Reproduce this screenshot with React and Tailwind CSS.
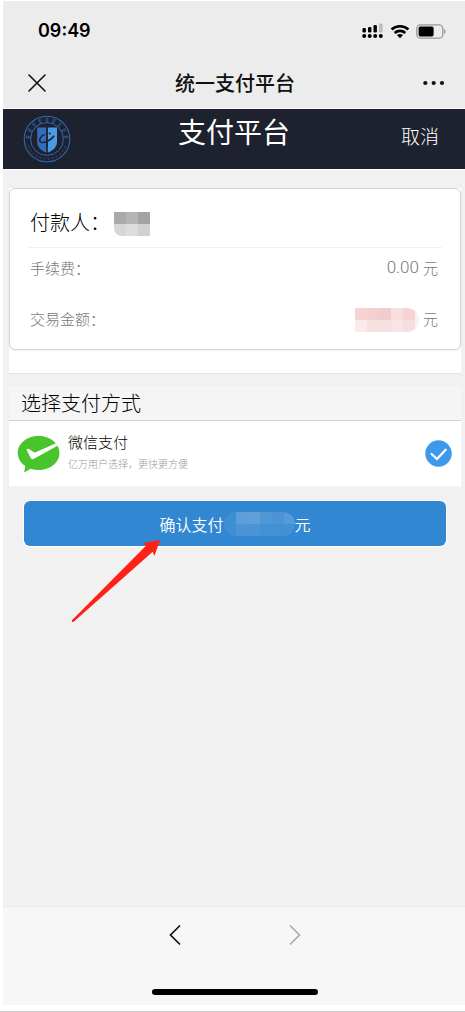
import { useState } from "react";

const RING_MARKS = [-84, -63, -42, -21, 0, 21, 42, 63, 84];
const RING_DOTS = [110, 122, 134, 146, 158, 170, 182, 194, 206, 218, 230, 242];

function SignalIcon() {
    return (
        <svg width="22" height="16" viewBox="0 0 22 16" aria-hidden="true">
            <rect x="0.5" y="5" width="3.4" height="4.4" rx="1.2" />
            <rect x="6" y="4" width="3.4" height="5.4" rx="1.2" />
            <rect x="11.5" y="2" width="3.4" height="7.4" rx="1.2" />
            <rect x="17" y="0.5" width="3.6" height="9" rx="1.2" fill="#bdbdbd" />
            <circle cx="2.2" cy="13" r="2" />
            <circle cx="7.7" cy="13" r="2" />
            <circle cx="13.2" cy="13" r="2" />
            <circle cx="18.8" cy="13" r="2" />
        </svg>
    );
}

function WifiIcon() {
    return (
        <svg width="20" height="15" viewBox="0 0 20 15" fill="none" stroke="#000" strokeWidth="2.7" aria-hidden="true">
            <path d="M1.6 5.6C6.3 1.1 13.7 1.1 18.4 5.6" />
            <path d="M4.7 9C7.7 6.2 12.3 6.2 15.3 9" />
            <path d="M10 14.2L6.9 11.1C8.6 9.5 11.4 9.5 13.1 11.1Z" fill="#000" stroke="none" />
        </svg>
    );
}

function BatteryIcon() {
    return (
        <svg width="31" height="15" viewBox="0 0 31 15" aria-hidden="true">
            <rect x="0.8" y="0.8" width="26" height="13.4" rx="3.8" fill="none" stroke="#999" strokeWidth="1.3" />
            <rect x="2.6" y="2.6" width="15" height="9.8" rx="1.6" />
            <path d="M28.2 5V10C29.8 9.4 29.8 5.6 28.2 5Z" fill="#888" />
        </svg>
    );
}

function SchoolLogo() {
    return (
        <svg width="48" height="48" viewBox="0 0 48 48" fill="none" stroke="#2f68ad" aria-hidden="true">
            <circle cx="24" cy="24" r="22.8" strokeWidth="1.1" />
            <circle cx="24" cy="24" r="16.4" strokeWidth="1" />
            {RING_MARKS.map((angle) => (
                <path
                    key={angle}
                    d="M22.2 3.6L25.8 3M24 2.8L23.4 6.6M22.4 5.4L25.6 4.9M22.6 7L25.4 6.5"
                    strokeWidth="0.6"
                    transform={`rotate(${angle} 24 24)`}
                />
            ))}
            {RING_DOTS.map((angle) => (
                <path key={angle} d="M23 43V44.6M24.2 43V44.6" strokeWidth="0.5" transform={`rotate(${angle - 176} 24 24)`} />
            ))}
            <path d="M14.2 12.4H23.2V37.4C18 35.8 14.2 32 14.2 27Z" fill="#326ec0" stroke="none" />
            <path d="M24.8 12.4H34V27C34 32 30 35.8 24.8 37.4Z" fill="#4a9be3" stroke="none" />
            <path d="M21.8 19.4C17.4 21 15.6 25 17.4 26.8C20 29 28.6 25.4 31 20.6" stroke="#1e222e" strokeWidth="1.5" />
            <path d="M26 17.6L27.6 19.4M24 12.4V32" stroke="#1e222e" strokeWidth="1.4" />
        </svg>
    );
}

function WechatPayIcon() {
    return (
        <svg width="43" height="38" viewBox="0 0 43 38" className="shrink-0" aria-hidden="true">
            <path
                d="M21.5 1C33 1 42.5 8.4 42.5 18C42.5 27.6 33 35 21.5 35C18.8 35 16.2 34.6 13.8 33.8L7.2 37.4L8.2 31.1C3.7 28 0.8 23.3 0.8 18C0.8 8.4 10 1 21.5 1Z"
                fill="#49c52c"
            />
            <path
                d="M9.8 14.3C10.4 13.2 11.7 13.6 12.7 14.4L16.4 17C17.3 17.6 18.2 17.5 19.2 17L39 8.2L40.5 10.8L17 23.8C15.4 24.7 14.4 24.4 13.7 23.1L10 15.8C9.8 15.3 9.6 14.8 9.8 14.3Z"
                fill="#fff"
            />
        </svg>
    );
}

function Mosaic({ rows, className }) {
    return (
        <span className={`flex flex-col overflow-hidden ${className}`} aria-hidden="true">
            {rows.map((row, i) => (
                <span key={i} className="flex h-3">
                    {row.map((color, j) => (
                        <span key={j} className="w-3 shrink-0" style={{ backgroundColor: color }} />
                    ))}
                </span>
            ))}
        </span>
    );
}

function StatusBar() {
    return (
        <div className="flex h-14 items-center justify-between pt-1 pr-[18px] pl-[35px]">
            <span className="font-[Inter,sans-serif] text-lg font-semibold text-black">09:49</span>
            <div className="flex items-center gap-1.5">
                <SignalIcon />
                <WifiIcon />
                <BatteryIcon />
            </div>
        </div>
    );
}

function TitleBar() {
    return (
        <div className="flex h-[51px] items-center justify-between pr-5 pl-6">
            <button type="button" aria-label="关闭">
                <svg width="20" height="20" viewBox="0 0 20 20" stroke="#111" strokeWidth="1.6" strokeLinecap="round">
                    <path d="M2 2L18 18M18 2L2 18" />
                </svg>
            </button>
            <h1 className="text-xl font-medium text-[#111]">统一支付平台</h1>
            <button type="button" aria-label="更多">
                <svg width="22" height="20" viewBox="0 0 22 20" fill="#111">
                    <circle cx="2.3" cy="10" r="2.1" />
                    <circle cx="10.7" cy="10" r="2.1" />
                    <circle cx="19" cy="10" r="2.1" />
                </svg>
            </button>
        </div>
    );
}

function Brand() {
    return (
        <div className="grid h-[62px] grid-cols-3 items-center border-y border-white bg-[#1e222e] px-5">
            <SchoolLogo />
            <h2 className="pb-4 text-center text-[28px] leading-8 whitespace-nowrap text-white">支付平台</h2>
            <button type="button" className="justify-self-end px-1.5 pb-1.5 text-[19px] leading-6 font-light text-white">
                取消
            </button>
        </div>
    );
}

function PayerCard() {
    return (
        <section className="border-b border-[#e2e2e2] bg-white pb-[23px]">
            <div className="rounded-md border border-[#d3d3d3] bg-white px-[18px] pt-3 shadow-xs">
                <div className="flex h-[47px] items-center gap-1 border-b border-[#f1f1f1] px-0.5 pb-1 text-xl font-light text-black">
                    <span>付款人：</span>
                    <Mosaic
                        className="mt-1 rounded-bl-lg"
                        rows={[
                            ["#aaaaaa", "#b5b5b5", "#a3a3a3"],
                            ["#d6d6d6", "#dddddd", "#d1d1d1"],
                        ]}
                    />
                </div>
                <dl className="text-[15px] font-light text-[#777]">
                    <div className="flex h-10 items-center justify-between pr-1 pl-0.5">
                        <dt>手续费：</dt>
                        <dd className="flex items-center gap-1">
                            <span className="font-[Roboto,sans-serif] text-[17px]">0.00</span>
                            <span>元</span>
                        </dd>
                    </div>
                    <div className="flex h-[61px] items-center justify-between pt-0.5 pr-1 pl-0.5">
                        <dt>交易金额：</dt>
                        <dd className="flex items-center gap-1">
                            <Mosaic
                                className="w-16 rounded-r-xl"
                                rows={[
                                    ["#f5d3d3", "#f3cfcf", "#f2cccc", "#f8dfdf", "#f5d3d3", "#faeeee"],
                                    ["#faeaea", "#f6e0e0", "#f6e0e0", "#f8e4e4", "#f7dfdf", "#faeeee"],
                                ]}
                            />
                            <span>元</span>
                        </dd>
                    </div>
                </dl>
            </div>
        </section>
    );
}

function PayMethods({ method, onChange }) {
    return (
        <section className="mt-3">
            <h3 className="flex h-[35px] items-center border-b border-[#d3d3d3] bg-[#f5f5f5] px-3 text-xl font-light text-black">
                选择支付方式
            </h3>
            <label className="flex h-[66px] items-center gap-2 border-b border-[#f7f7f7] bg-white pr-[9px] pl-2">
                <WechatPayIcon />
                <span className="flex flex-1 flex-col gap-0.5 pb-1.5">
                    <span className="text-[15px] leading-6 font-light text-black">微信支付</span>
                    <span className="text-[10px] leading-4 font-light text-[#999]">亿万用户选择，更快更方便</span>
                </span>
                <input
                    type="radio"
                    name="method"
                    value="wechat"
                    checked={method === "wechat"}
                    onChange={(e) => onChange(e.target.value)}
                    className="peer sr-only"
                />
                <svg
                    width="27"
                    height="27"
                    viewBox="0 0 27 27"
                    className="text-gray-300 peer-checked:text-[#3d9aea]"
                    aria-hidden="true"
                >
                    <circle cx="13.5" cy="13.5" r="13.2" fill="currentColor" />
                    <path
                        d="M6.5 14L12 19L20.7 9.8"
                        fill="none"
                        stroke="#fff"
                        strokeWidth="2.3"
                        strokeLinecap="round"
                    />
                </svg>
            </label>
        </section>
    );
}

function BottomBar() {
    return (
        <footer className="flex flex-col items-center border-t border-[#ececec] bg-[#f7f7f7] pb-2.5 pl-0.5">
            <div className="flex gap-[100px] pt-[17px] pb-[43px]">
                <button type="button" aria-label="后退">
                    <svg width="20" height="22" viewBox="0 0 20 22" fill="none" stroke="#111" strokeWidth="1.7">
                        <path d="M15 1.5L5.5 11L15 20.5" />
                    </svg>
                </button>
                <button type="button" aria-label="前进" disabled>
                    <svg width="20" height="22" viewBox="0 0 20 22" fill="none" stroke="#aaa" strokeWidth="1.7">
                        <path d="M5 1.5L14.5 11L5 20.5" />
                    </svg>
                </button>
            </div>
            <div className="h-1.5 w-[166px] rounded-full bg-black" />
        </footer>
    );
}

export default function App() {
    const [method, setMethod] = useState("wechat");

    return (
        <div className="flex min-h-screen flex-col border-b border-[#d0d0d0] bg-white pt-px pb-1.5 pl-[3px] font-['Noto_Sans_CJK_SC',sans-serif]">
            <header className="bg-[#ececec]">
                <StatusBar />
                <TitleBar />
                <Brand />
            </header>
            <main className="flex-1 bg-[#f1f1f1] pt-[18px] pr-1 pl-1.5">
                <PayerCard />
                <PayMethods method={method} onChange={setMethod} />
                <div className="relative mt-3.5 px-[15px]">
                    <button
                        type="button"
                        className="flex h-[45px] w-full items-center justify-center rounded-md bg-[#3187d2] text-base font-[350] text-white ring-1 ring-white"
                    >
                        <span>确认支付</span>
                        <Mosaic
                            className="w-[71px] rounded-xl"
                            rows={[
                                ["#3e8ed4", "#5c9fd8", "#619fd8", "#4f97d7", "#4c94d5", "#569cda"],
                                ["#3e8ed4", "#4b94d6", "#4b94d6", "#4390d5", "#4390d5", "#4390d5"],
                            ]}
                        />
                        <span>元</span>
                    </button>
                    <svg
                        width="90"
                        height="84"
                        viewBox="0 0 90 84"
                        className="pointer-events-none absolute top-[38px] left-[62px]"
                        aria-hidden="true"
                    >
                        <path
                            d="M89.3 0.7L71.7 4.3L75 6.7L0.7 81.5Q0.8 83.2 2.4 83L81.7 12.7L83.3 17Z"
                            fill="#ff2116"
                        />
                    </svg>
                </div>
            </main>
            <BottomBar />
        </div>
    );
}
